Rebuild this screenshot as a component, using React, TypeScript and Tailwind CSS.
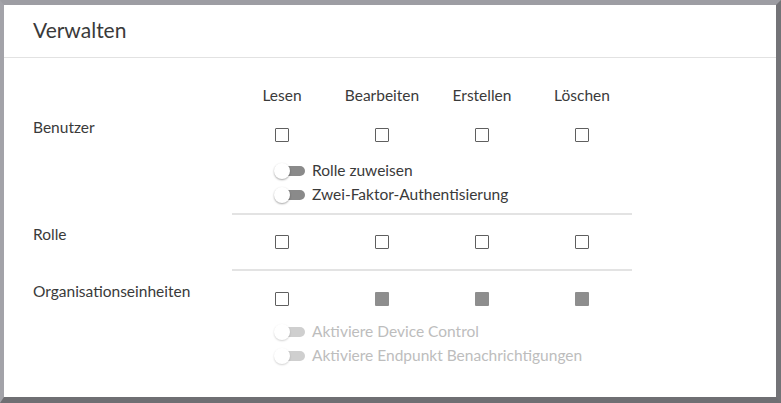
const cols = ['Lesen', 'Bearbeiten', 'Erstellen', 'Löschen']

const Box = ({ filled }: { filled?: boolean }) =>
  filled ? (
    <div className="w-[14px] h-[14px] bg-[#8e8e8e] rounded-[1px]" />
  ) : (
    <div className="w-[14px] h-[14px] border border-[#5f5f5f] rounded-[1px] bg-white" />
  )

const Toggle = ({ label, disabled }: { label: string; disabled?: boolean }) => (
  <div className="flex items-center h-[24px]">
    <div className="relative w-[32px] h-[16px] flex items-center">
      <div className={`absolute left-[5px] w-[26px] h-[10px] rounded-full ${disabled ? 'bg-[#cfcfcf]' : 'bg-[#8a8a8a]'}`} />
      <div className={`absolute left-0 w-[16px] h-[16px] rounded-full bg-white ${disabled ? 'shadow-[0_1px_2px_rgba(0,0,0,0.18)]' : 'shadow-[0_1px_2px_rgba(0,0,0,0.35)]'}`} />
    </div>
    <span className={`ml-[6px] ${disabled ? 'text-[#bdbdbd]' : 'text-[#3a3a3a]'}`}>{label}</span>
  </div>
)

const Row = ({ label, filled = [] }: { label: string; filled?: number[] }) => (
  <div className="flex">
    <div className="w-[228px] pl-[29px] leading-[20px]">{label}</div>
    {cols.map((c, i) => (
      <div key={c} className="w-[100px] flex justify-center pt-[11px]">
        <Box filled={filled.includes(i)} />
      </div>
    ))}
  </div>
)

const Divider = () => <div className="ml-[228px] w-[400px] h-[2px] bg-[#e3e3e3]" />

export default function App() {
  return (
    <div
      className="w-[781px] h-[403px] border-t-[5px] border-l-[4px] border-r-[5px] border-b-[6px] border-t-[#9d9da3] border-l-[#a3a3a9] border-r-[#737377] border-b-[#6f6f73] bg-white text-[15.5px] text-[#3a3a3a]"
      style={{ fontFamily: 'Lato, "Open Sans", sans-serif' }}
    >
      <div className="h-[53px] border-b border-[#e2e2e2] pl-[29px] flex items-center">
        <h1 className="text-[21px] text-[#3a3a3a] pb-[3px]">Verwalten</h1>
      </div>

      <div className="flex pt-[27px] leading-[20px]">
        <div className="w-[228px]" />
        {cols.map((c) => (
          <div key={c} className="w-[100px] text-center">{c}</div>
        ))}
      </div>

      <div className="pt-[12px]">
        <Row label="Benutzer" />
        <div className="pl-[270px] pt-[17px] pb-[6px]">
          <Toggle label="Rolle zuweisen" />
          <Toggle label="Zwei-Faktor-Authentisierung" />
        </div>
      </div>
      <Divider />

      <div className="pt-[9px] pb-[20px]">
        <Row label="Rolle" />
      </div>
      <Divider />

      <div className="pt-[10px]">
        <Row label="Organisationseinheiten" filled={[1, 2, 3]} />
        <div className="pl-[270px] pt-[14px]">
          <Toggle label="Aktiviere Device Control" disabled />
          <Toggle label="Aktiviere Endpunkt Benachrichtigungen" disabled />
        </div>
      </div>
    </div>
  )
}
